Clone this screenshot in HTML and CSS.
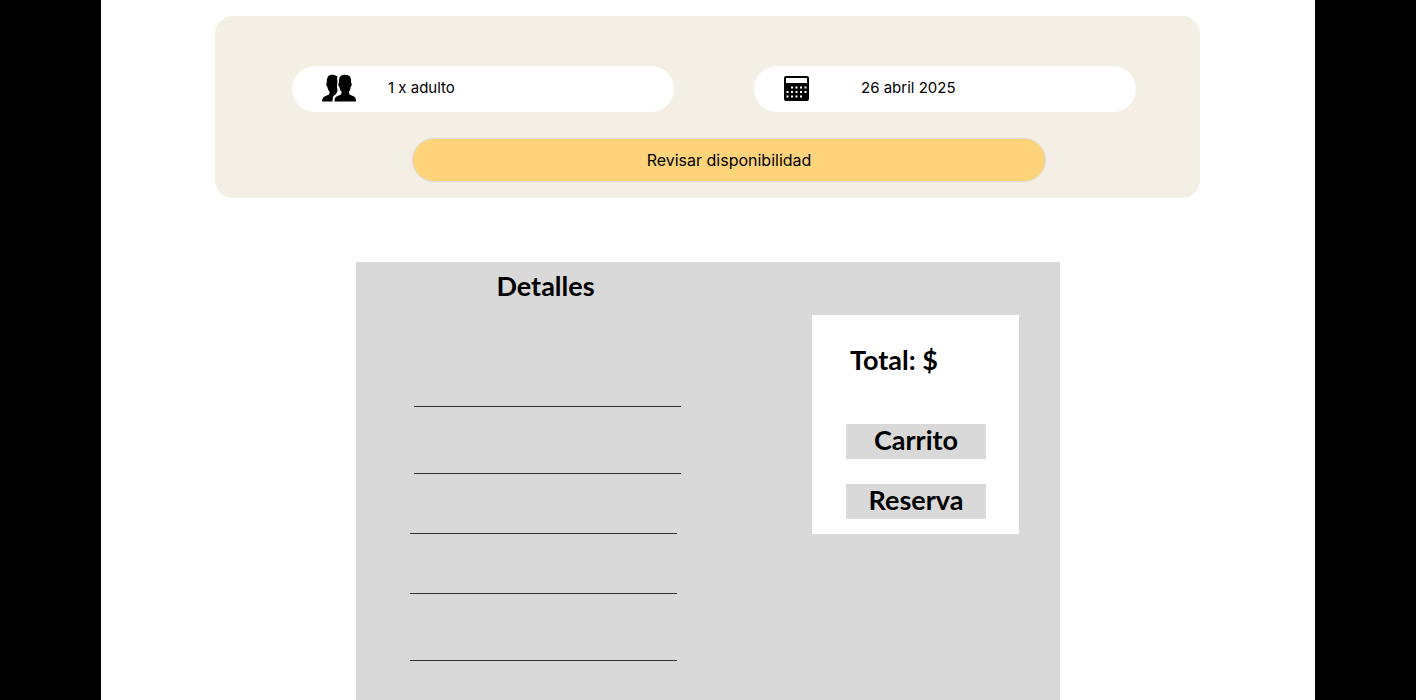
FILE: index.html
```html
<!DOCTYPE html>
<html lang="es">
<head>
<meta charset="utf-8">
<meta name="viewport" content="width=device-width, initial-scale=1">
<title>Disponibilidad</title>
<link rel="stylesheet" href="styles.css">
</head>
<body>
<main class="page">
  <form class="search">
    <div class="fields">
      <div class="field">
        <label class="field-label" for="people" aria-label="Personas">
          <svg class="icon-people" viewBox="0 0 34 28" aria-hidden="true">
            <path d="M10 0.800Q13 0.500 15.600 2.800L15 4 15.500 8 15 12 15.500 17 14 20 12 21.500Q10.500 23 10.500 27.500H0Q0 24 2 22.800L6.500 20.800 7.500 19.500V17.500Q5.800 16 5.400 13Q4.300 12.500 4.200 10L4.800 8.500V6Q5.500 0.800 10 0.800Z"/>
            <path stroke="#fff" stroke-width="1.600" paint-order="stroke" d="M23 0.800Q28.800 0.800 29 6V8.500L29.800 10Q29.600 12.500 28.600 13Q28.500 16 27 17.500V19.500L28 20.800 32 22.500Q34 23.500 34 27.500H12.500Q12.500 23.500 14.500 22.500L18.500 20.800 19.500 19.500V17.500Q17.800 16 17.400 13Q16.400 12.500 16.200 10L17 8.500V6Q17.200 0.800 23 0.800Z"/>
          </svg>
        </label>
        <input class="field-input" id="people" type="text" value="1 x adulto">
      </div>
      <div class="field">
        <label class="field-label" for="date" aria-label="Fecha">
          <svg class="icon-date" viewBox="0 0 25 25" aria-hidden="true">
            <rect width="25" height="25" rx="2"/>
            <rect x="2" y="2" width="21" height="5" fill="#fff"/>
            <g fill="none" stroke="#fff" stroke-width="2">
              <path d="M7 11.500H23" stroke-dasharray="2 2.500"/>
              <path d="M2.500 16H23" stroke-dasharray="2 2.500"/>
              <path d="M2.500 20.500H18.500" stroke-dasharray="2 2.500"/>
            </g>
          </svg>
        </label>
        <input class="field-input field-input-date" id="date" type="text" value="26 abril 2025">
      </div>
    </div>
    <button class="check" type="button">Revisar disponibilidad</button>
  </form>

  <section class="panel">
    <div class="details">
      <h2 class="title">Detalles</h2>
      <ul class="lines">
        <li class="line line-first"></li>
        <li class="line line-tall line-shifted"></li>
        <li class="line"></li>
        <li class="line"></li>
        <li class="line line-tall"></li>
      </ul>
    </div>
    <aside class="summary">
      <p class="total">Total: $</p>
      <button class="action" type="button">Carrito</button>
      <button class="action" type="button">Reserva</button>
    </aside>
  </section>
</main>
</body>
</html>
```
FILE: styles.css
```css
* {
  box-sizing: border-box;
}

body {
  margin: 0;
  padding: 0 101px;
  background: #000;
  color: #000;
  font-family: Inter, sans-serif;
}

.page {
  display: flex;
  flex-direction: column;
  min-height: 100vh;
  padding-top: 16px;
  background: #fff;
}

.search {
  display: flex;
  flex-direction: column;
  gap: 26px;
  margin: 0 115px 0 114px;
  padding: 50px 64px 16px 77px;
  border-radius: 18px;
  background: #f4efe4;
}

.fields {
  display: flex;
  gap: 80px;
}

.field {
  display: flex;
  flex: 1;
  align-items: center;
  min-width: 0;
  height: 46px;
  padding: 0 30px 2px;
  border-radius: 23px;
  background: #fff;
}

.field-label {
  display: flex;
  flex: none;
}

.icon-people {
  width: 34px;
  height: 28px;
}

.icon-date {
  width: 25px;
  height: 25px;
}

.field-input {
  flex: 1;
  min-width: 0;
  margin-left: 32px;
  padding: 0;
  border: 0;
  background: transparent;
  color: inherit;
  font: 15px/24px Inter, sans-serif;
}

.field-input-date {
  margin-left: 52px;
}

.check {
  height: 44px;
  margin: 0 90px 0 120px;
  border: 1px solid #d9d9d9;
  border-radius: 22px;
  background: #ffd37a;
  color: inherit;
  font: 16px/24px Inter, sans-serif;
}

.panel {
  display: grid;
  flex: 1;
  grid-template-columns: 1fr 207px;
  gap: 131px;
  align-items: start;
  margin: 64px 255px 0;
  padding: 8px 41px 0 54px;
  background: #d9d9d9;
}

.title,
.total,
.action {
  margin: 0;
  font: 700 27px/32px Lato, sans-serif;
}

.title {
  text-align: center;
}

.lines {
  margin: 0;
  padding: 0;
  list-style: none;
}

.line {
  height: 60px;
  margin-right: 4px;
  border-bottom: 1px solid #333;
}

.line-first {
  height: 105px;
}

.line-tall {
  height: 67px;
}

.line-first,
.line-shifted {
  margin-right: 0;
  margin-left: 4px;
}

.summary {
  display: flex;
  flex-direction: column;
  gap: 25px;
  margin-top: 45px;
  padding: 29px 33px 15px 34px;
  background: #fff;
}

.total {
  margin-bottom: 23px;
  padding-left: 4px;
}

.action {
  height: 35px;
  padding: 0 0 3px;
  border: 0;
  background: #d9d9d9;
  color: inherit;
}
```
